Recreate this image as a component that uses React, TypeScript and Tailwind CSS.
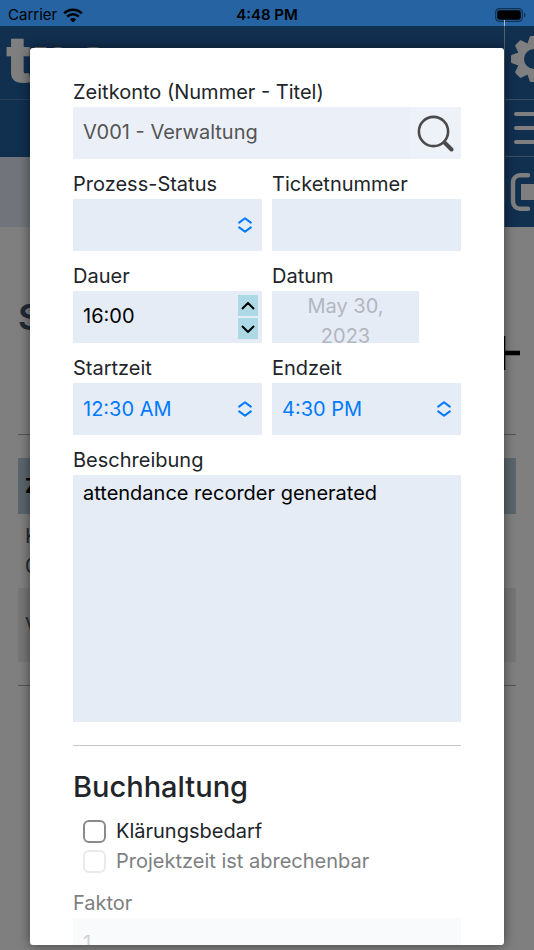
import React from "react";

interface FieldProps {
	label: string;
	id: string;
	muted?: boolean;
	children: React.ReactNode;
}

const Field: React.FC<FieldProps> = ({ label, id, muted, children }) => (
	<div className="flex min-w-0 flex-col">
		<label
			htmlFor={id}
			className={muted ? "text-[#7d7f82]" : "text-[#212529]"}
		>
			{label}
		</label>
		{children}
	</div>
);

interface SelectFieldProps {
	label: string;
	id: string;
	value: string;
}

const SelectField: React.FC<SelectFieldProps> = ({ label, id, value }) => (
	<Field label={label} id={id}>
		<div className="relative">
			<select
				id={id}
				defaultValue={value}
				className="block h-[52px] w-full appearance-none bg-[#e5ecf6] px-2.5 text-[#007aff]"
			>
				<option value={value}>{value}</option>
			</select>
			<svg
				viewBox="0 0 14 16"
				className="pointer-events-none absolute top-[18px] right-2.5 h-4 w-3.5"
				fill="none"
				stroke="#007aff"
				strokeWidth="2"
				strokeLinecap="round"
				strokeLinejoin="round"
			>
				<path d="M1.2 5.6 7 1.2l5.8 4.4M1.2 10.4 7 14.8l5.8-4.4" />
			</svg>
		</div>
	</Field>
);

const StatusBar = () => (
	<div className="relative z-20 grid h-[26px] grid-cols-3 items-center bg-[#2563a2] px-2 text-[15px] text-black">
		<div className="flex items-center gap-1.5">
			<span>Carrier</span>
			<svg viewBox="0 0 20 15" className="h-[15px] w-5">
				<path d="M10 14.6 6.9 11.4a4.4 4.4 0 0 1 6.2 0z" />
				<path
					d="M4.2 8.7a8.2 8.2 0 0 1 11.6 0M1.2 5.4a12.4 12.4 0 0 1 17.6 0"
					fill="none"
					stroke="#000"
					strokeWidth="2.6"
				/>
			</svg>
		</div>
		<span className="text-center font-semibold">4:48 PM</span>
		<svg viewBox="0 0 31 14" className="h-3.5 w-[31px] justify-self-end">
			<rect x=".7" y=".7" width="26.6" height="12.6" rx="3.6" fill="none" stroke="#12304f" strokeWidth="1.2" />
			<rect x="2.2" y="2.2" width="23.6" height="9.6" rx="2.2" />
			<path d="M29 4.5c2 .8 2 4.2 0 5z" fill="#12304f" />
		</svg>
		{/* top end of the toolbar divider */}
		<div className="absolute right-[29px] bottom-0 h-1.5 w-px bg-[#a9bdd2]" />
	</div>
);

const GearIcon = () => (
	<svg viewBox="-23 -23 46 46" className="size-[46px] shrink-0" fill="#fff">
		<circle r="13.5" fill="none" stroke="#fff" strokeWidth="7" />
		{[0, 45, 90, 135, 180, 225, 270, 315].map((angle) => (
			<path
				key={angle}
				d="M-6.5-15.5-4.3-22q.3-1 1.3-1h6q1 0 1.3 1l2.2 6.5z"
				transform={`rotate(${angle})`}
			/>
		))}
	</svg>
);

const Toolbar = () => (
	<div className="flex w-[30px] flex-col border-l border-white/60 bg-[#225e9e]">
		<button aria-label="Einstellungen" className="flex h-[74px] items-start overflow-hidden border-b border-white/40 pt-2.5 pl-1.5">
			<GearIcon />
		</button>
		<button aria-label="Menü" className="flex h-[57px] items-center overflow-hidden border-b border-white/40 pl-2">
			<svg viewBox="0 0 40 34" className="h-[34px] w-10 shrink-0" stroke="#fff" strokeWidth="4" strokeLinecap="round">
				<path d="M3 3h36M3 17h36M3 31h36" />
			</svg>
		</button>
		<button aria-label="Abmelden" className="flex h-[69px] items-center overflow-hidden pl-[5px]">
			<svg viewBox="0 0 44 40" className="h-10 w-11 shrink-0" fill="none" stroke="#fff" strokeWidth="4.4">
				<path d="M18 3.2h-8a7 7 0 0 0-7 7v19.6a7 7 0 0 0 7 7h8" strokeLinecap="round" />
				<path d="M11 12h30v16H11z" fill="#fff" stroke="none" />
			</svg>
		</button>
	</div>
);

const TimesheetPage = () => (
	<div>
		<header className="flex">
			<div className="min-w-0 flex-1">
				<div className="h-[74px] overflow-hidden border-b border-white/20 bg-[#225e9e] pl-1.5 text-[64px] leading-[66px] font-black text-white">
					tnc
				</div>
				<div className="h-[57px] bg-[#225e9e]" />
				<div className="h-[70px] bg-[#e3ebf6]" />
			</div>
			<Toolbar />
		</header>
		<main className="px-[18px] pt-[70px] text-[#3f526a]">
			<div className="flex justify-between">
				<h1 className="text-4xl leading-10 font-semibold">S</h1>
				<button aria-label="Neu" className="mt-[39px] -mr-1">
					<svg viewBox="0 0 34 34" className="size-[34px]" stroke="#000" strokeWidth="4.6">
						<path d="M17 0v34M0 17h34" />
					</svg>
				</button>
			</div>
			<table className="mt-16 w-full border-y border-[#aaa]">
				<thead>
					<tr>
						<td className="h-[23px]" />
					</tr>
					<tr className="h-14 bg-[#b5ccd8] text-left text-black">
						<th className="px-[7px] font-bold">Z</th>
					</tr>
				</thead>
				<tbody>
					<tr className="h-[74px]">
						<td className="px-[7px]">
							K<br />0
						</td>
					</tr>
					<tr className="h-[74px] bg-[#ececec]">
						<td className="px-[7px]">V</td>
					</tr>
					<tr>
						<td className="h-6" />
					</tr>
				</tbody>
			</table>
		</main>
	</div>
);

const EntryDialog = () => (
	<div
		role="dialog"
		aria-modal="true"
		className="flex-1 overflow-hidden rounded-[3px] bg-white px-[43px] pt-[29px] shadow-[0_0_12px_rgba(0,0,0,0.5)]"
	>
		<form className="flex flex-col gap-2.5">
			<Field label="Zeitkonto (Nummer - Titel)" id="account">
				<div className="flex h-[52px] bg-[#ebf0f8]">
					<input
						id="account"
						defaultValue="V001 - Verwaltung"
						readOnly
						className="min-w-0 flex-1 px-2.5 pb-0.5 text-[#545454]"
					/>
					<button type="button" aria-label="Suchen" className="flex w-[51px] items-center justify-center bg-[#edf2f9]">
						<svg viewBox="0 0 38 38" className="size-[38px]" fill="none" stroke="#4a4a4a" strokeLinecap="round">
							<circle cx="16.5" cy="17.5" r="14.6" strokeWidth="2.6" />
							<path d="m28 29 6.5 6.5" strokeWidth="4" />
						</svg>
					</button>
				</div>
			</Field>

			<div className="grid grid-cols-2 gap-2.5">
				<SelectField label="Prozess-Status" id="status" value="" />
				<Field label="Ticketnummer" id="ticket">
					<input id="ticket" className="h-[52px] bg-[#e5ecf6] px-2.5" />
				</Field>

				<Field label="Dauer" id="duration">
					<div className="flex h-[52px] items-center bg-[#e5ecf6] pr-1">
						<input id="duration" defaultValue="16:00" className="h-full min-w-0 flex-1 px-2.5 pb-0.5 text-black" />
						<div className="flex flex-col gap-0.5">
							<button type="button" aria-label="Mehr" className="flex h-[21px] w-5 items-center justify-center bg-[#add8e6]">
								<svg viewBox="0 0 14 8" className="h-2 w-3.5" fill="none" stroke="#000" strokeWidth="2">
									<path d="m1 7 6-6 6 6" />
								</svg>
							</button>
							<button type="button" aria-label="Weniger" className="flex h-[21px] w-5 items-center justify-center bg-[#add8e6]">
								<svg viewBox="0 0 14 8" className="h-2 w-3.5" fill="none" stroke="#000" strokeWidth="2">
									<path d="m1 1 6 6 6-6" />
								</svg>
							</button>
						</div>
					</div>
				</Field>
				<Field label="Datum" id="date">
					<button
						type="button"
						id="date"
						disabled
						className="flex h-[52px] w-[147px] items-start justify-center overflow-hidden bg-[#e5ecf6] px-7 text-[#b2b7c0]"
					>
						May 30, 2023
					</button>
				</Field>

				<SelectField label="Startzeit" id="start" value="12:30 AM" />
				<SelectField label="Endzeit" id="end" value="4:30 PM" />
			</div>

			<Field label="Beschreibung" id="description">
				<textarea
					id="description"
					defaultValue="attendance recorder generated"
					className="block h-[247px] resize-none bg-[#e5ecf6] px-2.5 py-[3px] text-black"
				/>
			</Field>

			<hr className="mt-[13px] border-[#c6c6c6]" />

			<section className="mt-[13px] pb-0.5">
				<h2 className="text-[29px] leading-9 font-medium text-[#212529]">
					Buchhaltung
				</h2>
				<div className="mt-[11px] pl-2.5">
					<label className="flex items-center gap-2.5 text-[#212529]">
						<input type="checkbox" className="size-[23px] appearance-none rounded-md border-2 border-[#8a8a8e] bg-white" />
						Klärungsbedarf
					</label>
					<label className="flex items-center gap-2.5 text-[#7d7f82]">
						<input type="checkbox" disabled className="size-[23px] appearance-none rounded-md border-2 border-[#e9e9ea] bg-white" />
						Projektzeit ist abrechenbar
					</label>
				</div>
			</section>

			<Field label="Faktor" id="factor" muted>
				<input id="factor" defaultValue="1" disabled className="h-[52px] bg-[#f9fafc] px-2.5 pb-0.5 text-[#d3d3d3]" />
			</Field>
		</form>
	</div>
);

export default function App() {
	return (
		<div className="relative flex h-screen flex-col overflow-hidden bg-white font-['Inter',sans-serif] text-xl leading-[30px]">
			<StatusBar />
			<TimesheetPage />
			<div className="absolute inset-0 z-10 flex bg-black/50 px-[30px] pt-12 pb-[5px]">
				<EntryDialog />
			</div>
		</div>
	);
}
